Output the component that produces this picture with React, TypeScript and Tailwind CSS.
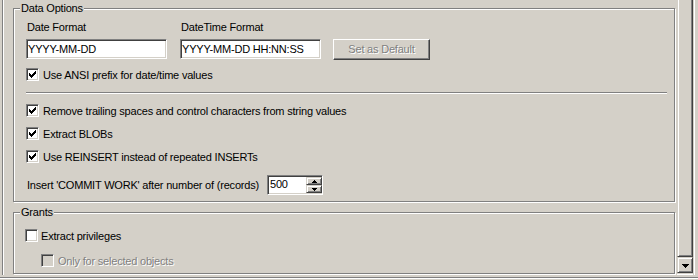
const SUNKEN =
  "border border-t-[#808080] border-l-[#808080] border-r-white border-b-white shadow-[inset_1px_1px_0_#404040,inset_-1px_-1px_0_#d4d0c8]";
const RAISED =
  "border border-t-[#d4d0c8] border-l-[#d4d0c8] border-r-[#404040] border-b-[#404040] shadow-[inset_1px_1px_0_#fff,inset_-1px_-1px_0_#808080]";
const GROUP =
  "relative border border-[#808080] shadow-[inset_1px_1px_0_#fff,1px_1px_0_#fff]";

function Check() {
  return (
    <svg width="7" height="7" viewBox="0 0 7 7" shapeRendering="crispEdges" className="m-[2px] block">
      <path
        fill="#000"
        d="M6 0h1v1h-1z M5 1h2v1h-2z M0 2h1v1h-1z M4 2h3v1h-3z M0 3h2v1h-2z M3 3h3v1h-3z M0 4h5v1h-5z M1 5h3v1h-3z M2 6h1v1h-1z"
      />
    </svg>
  );
}

function CheckBox({ checked, disabled }: { checked?: boolean; disabled?: boolean }) {
  return (
    <div
      className={`h-[13px] w-[13px] shrink-0 ${SUNKEN} ${disabled ? "bg-[#d4d0c8]" : "bg-white"}`}
    >
      {checked && <Check />}
    </div>
  );
}

function CheckRow({
  label,
  checked,
  disabled,
  gap = "ml-[4px]",
  className = "",
}: {
  label: string;
  checked?: boolean;
  disabled?: boolean;
  gap?: string;
  className?: string;
}) {
  return (
    <div className={`flex items-start ${className}`}>
      <CheckBox checked={checked} disabled={disabled} />
      <span
        className={`${gap} mt-px whitespace-nowrap ${
          disabled ? "text-[#808080] [text-shadow:1px_1px_0_#fff]" : "text-black"
        }`}
      >
        {label}
      </span>
    </div>
  );
}

function Legend({ children }: { children: string }) {
  return (
    <span className="absolute -top-[7px] left-[6px] bg-[#d4d0c8] px-px leading-[13px]">
      {children}
    </span>
  );
}

function TextField({ label, value }: { label: string; value: string }) {
  return (
    <div className="flex flex-col">
      <span className="ml-px">{label}</span>
      <div className={`mt-[5px] flex h-[20px] w-[141px] items-center bg-white ${SUNKEN}`}>
        <span className="pl-px">{value}</span>
      </div>
    </div>
  );
}

function SpinEdit({ value }: { value: string }) {
  return (
    <div className={`flex h-[20px] w-[56px] bg-white ${SUNKEN}`}>
      <span className="flex-1 pl-[2px] pt-[2px]">{value}</span>
      <div className="flex w-[16px] flex-col pt-px pb-px">
        <div className={`flex h-[8px] items-center justify-center bg-[#d4d0c8] ${RAISED}`}>
          <svg width="5" height="3" viewBox="0 0 5 3" shapeRendering="crispEdges">
            <path fill="#000" d="M2 0h1v1h-1z M1 1h3v1h-3z M0 2h5v1h-5z" />
          </svg>
        </div>
        <div className={`flex h-[8px] items-center justify-center bg-[#d4d0c8] ${RAISED}`}>
          <svg width="5" height="3" viewBox="0 0 5 3" shapeRendering="crispEdges">
            <path fill="#000" d="M0 0h5v1h-5z M1 1h3v1h-3z M2 2h1v1h-1z" />
          </svg>
        </div>
      </div>
    </div>
  );
}

export default function App() {
  return (
    <div className="h-[280px] w-[698px] overflow-hidden bg-[#d4d0c8] font-['Liberation_Sans',Arial,sans-serif] text-[11px] leading-[13px] tracking-[-0.2px] text-black">
      <div className="flex h-[275px]">
        {/* left frame */}
        <div className="w-[2px]" />
        <div className="w-px bg-[#808080]" />
        <div className="w-px bg-white" />

        {/* scrolled content */}
        <div className="flex w-[673px] flex-col overflow-hidden pt-[8px] pl-[9px]">
          <div className={`${GROUP} h-[194px] w-[662px] shrink-0 pt-[12px] pl-[12px]`}>
            <Legend>Data Options</Legend>

            <div className="flex items-start">
              <TextField label="Date Format" value="YYYY-MM-DD" />
              <div className="ml-[13px]">
                <TextField label="DateTime Format" value="YYYY-MM-DD HH:NN:SS" />
              </div>
              <div className="mt-[18px] ml-[12px] flex h-[21px] w-[97px] items-center justify-center border border-t-white border-l-white border-r-[#404040] border-b-[#404040] shadow-[inset_-1px_-1px_0_#808080] text-[#808080] [text-shadow:1px_1px_0_#fff]">
                Set as Default
              </div>
            </div>

            <CheckRow className="mt-[8px]" checked label="Use ANSI prefix for date/time values" />

            <div className="mt-[10px] h-[2px] w-[641px] border-t border-[#808080] bg-white" />

            <CheckRow
              className="mt-[10px]"
              checked
              label="Remove trailing spaces and control characters from string values"
            />
            <CheckRow className="mt-[9px]" checked label="Extract BLOBs" />
            <CheckRow className="mt-[9px]" checked label="Use REINSERT instead of repeated INSERTs" />

            <div className="mt-[11px] flex items-center">
              <span className="ml-px w-[240px] whitespace-nowrap">
                Insert 'COMMIT WORK' after number of (records)
              </span>
              <SpinEdit value="500" />
            </div>
          </div>

          <div className={`${GROUP} mt-[10px] h-[62px] w-[662px] shrink-0 pt-[16px] pl-[11px]`}>
            <Legend>Grants</Legend>
            <CheckRow gap="ml-[3px]" label="Extract privileges" />
            <CheckRow className="mt-[11px] ml-[16px]" disabled label="Only for selected objects" />
          </div>
        </div>

        {/* vertical scrollbar */}
        <div className="flex w-[16px] flex-col">
          <div className="h-[257px] border-r border-b border-l border-r-[#404040] border-b-[#404040] border-l-[#d4d0c8] shadow-[inset_1px_0_0_#fff,inset_-1px_-1px_0_#808080]" />
          <div className={`flex h-[16px] items-center justify-center ${RAISED}`}>
            <svg width="7" height="4" viewBox="0 0 7 4" shapeRendering="crispEdges" className="mt-px">
              <path fill="#000" d="M0 0h7v1h-7z M1 1h5v1h-5z M2 2h3v1h-3z M3 3h1v1h-1z" />
            </svg>
          </div>
          <div className="h-[2px] border-b border-white" />
        </div>

        {/* right frame */}
        <div className="w-px" />
        <div className="w-px bg-white" />
        <div className="w-[3px]" />
      </div>
      <div className="h-[2px]" />
      <div className="h-px bg-[#808080]" />
      <div className="h-px bg-white" />
    </div>
  );
}
